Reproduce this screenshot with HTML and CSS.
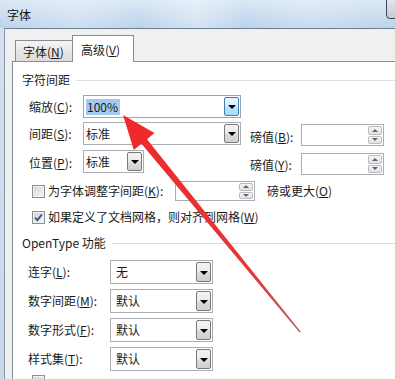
FILE: index.html
```html
<!DOCTYPE html>
<html lang="zh">
<head>
<meta charset="utf-8">
<title>字体</title>
<link rel="stylesheet" href="styles.css">
</head>
<body>
<div class="window">
  <div class="titlebar">
    <span class="title">字体</span>
    <div class="close"></div>
  </div>
  <div class="client">
    <div class="tabs">
      <div class="tab">字体(<u>N</u>)</div>
      <div class="tab active">高级(<u>V</u>)</div>
    </div>
    <div class="panel">
      <div class="gtitle">字符间距</div>

      <div class="row r1">
        <span class="lbl">缩放(<u>C</u>):</span>
        <div class="combo w-wide hot"><span class="val sel">100%</span><span class="btn"></span></div>
      </div>

      <div class="row r2">
        <span class="lbl">间距(<u>S</u>):</span>
        <div class="combo w-wide"><span class="val">标准</span><span class="btn"></span></div>
        <span class="plbl">磅值(<u>B</u>):</span>
        <div class="spin"><div class="sb"><span class="up"></span><span class="dn"></span></div></div>
      </div>

      <div class="row r3">
        <span class="lbl">位置(<u>P</u>):</span>
        <div class="combo w-narrow"><span class="val">标准</span><span class="btn"></span></div>
        <span class="plbl far">磅值(<u>Y</u>):</span>
        <div class="spin"><div class="sb"><span class="up"></span><span class="dn"></span></div></div>
      </div>

      <div class="crow c1">
        <span class="chk"></span>
        <span class="ctext fixed">为字体调整字间距(<u>K</u>):</span>
        <div class="spin small"><div class="sb"><span class="up"></span><span class="dn"></span></div></div>
        <span class="after">磅或更大(<u>O</u>)</span>
      </div>

      <div class="crow c2">
        <span class="chk checked"><svg viewBox="0 0 11 11" width="11" height="11"><path d="M2 5.6 L4.4 8.2 L9 2.4" fill="none" stroke="#3c5a90" stroke-width="1.9"/></svg></span>
        <span class="ctext">如果定义了文档网格，则对齐到网格(<u>W</u>)</span>
      </div>

      <div class="gtitle g2">OpenType 功能</div>

      <div class="lrow first">
        <span class="llbl">连字(<u>L</u>):</span>
        <div class="combo w-mid tall"><span class="val">无</span><span class="btn"></span></div>
      </div>
      <div class="lrow">
        <span class="llbl">数字间距(<u>M</u>):</span>
        <div class="combo w-mid tall"><span class="val">默认</span><span class="btn"></span></div>
      </div>
      <div class="lrow">
        <span class="llbl">数字形式(<u>F</u>):</span>
        <div class="combo w-mid tall"><span class="val">默认</span><span class="btn"></span></div>
      </div>
      <div class="lrow">
        <span class="llbl">样式集(<u>T</u>):</span>
        <div class="combo w-mid tall"><span class="val">默认</span><span class="btn"></span></div>
      </div>

      <div class="crow last">
        <span class="chk"></span>
      </div>
    </div>
  </div>
</div>

<svg class="arrow" width="395" height="379" viewBox="0 0 395 379">
  <defs>
    <linearGradient id="ag" gradientUnits="userSpaceOnUse" x1="123" y1="116" x2="300" y2="332">
      <stop offset="0" stop-color="#f0282a"/>
      <stop offset="0.75" stop-color="#e5383a"/>
      <stop offset="1" stop-color="#b0605e"/>
    </linearGradient>
  </defs>
  <polygon fill="url(#ag)" points="123,115 154.5,133 147,139.2 300.6,331.6 299.6,332.6 141.4,143.8 133.8,150"/>
</svg>
</body>
</html>
```

FILE: styles.css
```css
html, body {
  margin: 0;
  padding: 0;
}

body {
  width: 395px;
  height: 379px;
  overflow: hidden;
  position: relative;
  font-family: "Noto Sans CJK SC", "Noto Sans", sans-serif;
  font-size: 12px;
  color: #1a1a1a;
  background: #cfdbe9;
}

u {
  text-decoration: underline;
  text-underline-offset: 1px;
}

.window {
  height: 379px;
  overflow: hidden;
  display: flex;
  flex-direction: column;
  background: linear-gradient(#d4e1ee, #c9d8e8);
}

.titlebar {
  height: 28px;
  flex: none;
  position: relative;
  display: flex;
  align-items: center;
  padding: 2px 0 0 7px;
  box-sizing: border-box;
  background:
    linear-gradient(90deg, rgba(255,255,255,0) 0%, rgba(255,255,255,0.25) 20%, rgba(255,255,255,0) 35%, rgba(255,255,255,0.35) 50%, rgba(255,255,255,0) 62%, rgba(255,255,255,0.2) 78%, rgba(255,255,255,0) 100%),
    linear-gradient(#dce8f5, #c8dbef 60%, #bcd3ec);
}

.title {
  line-height: 16px;
  color: #111;
}

.close {
  position: absolute;
  right: -7px;
  top: -1px;
  width: 14px;
  height: 18px;
  border: 1px solid #3a4658;
  border-radius: 0 0 0 4px;
  background: linear-gradient(#e2e7ed, #c3cbd5);
}

.client {
  flex: 1;
  min-height: 0;
  overflow: hidden;
  margin-left: 4px;
  border-left: 1px solid #8494a6;
  border-top: 1px solid #6c7d92;
  background: #f0f0f0;
  padding: 6px 0 0 7px;
  display: flex;
  flex-direction: column;
}

.tabs {
  display: flex;
  align-items: flex-end;
  height: 27px;
  margin: 0 0 -1px 3px;
  position: relative;
  z-index: 1;
}

.tab {
  box-sizing: border-box;
  height: 21px;
  width: 57px;
  margin-bottom: 1px;
  border: 1px solid #898c95;
  border-bottom: none;
  border-right: none;
  background: linear-gradient(#f4f4f4, #e6e6e6 55%, #dcdcdc);
  display: flex;
  align-items: center;
  padding: 1px 0 0 7px;
  line-height: 16px;
  white-space: nowrap;
}

.tab.active {
  height: 27px;
  width: 62px;
  margin-bottom: 0;
  border-right: 1px solid #898c95;
  background: #fff;
  padding: 2px 0 0 8px;
}

.panel {
  flex: 1;
  border: 1px solid #898c95;
  border-right: none;
  background: #fff;
}

.gtitle {
  display: flex;
  align-items: center;
  height: 16px;
  line-height: 16px;
  margin: 10px 0 0 9px;
  white-space: nowrap;
}

.gtitle::after {
  content: "";
  flex: 1;
  height: 1px;
  margin-left: 6px;
  background: #dcdfe3;
}

.gtitle.g2 {
  margin-top: 10px;
}

.row {
  display: flex;
  align-items: flex-start;
  margin-left: 16px;
  height: 25px;
}

.row.r1 {
  margin-top: 7px;
  height: 23px;
}

.row.r2 {
  margin-top: 4px;
}

.row.r3 {
  margin-top: 3px;
}

.lbl {
  width: 54px;
  line-height: 16px;
  margin-top: 4px;
  white-space: nowrap;
}

.r3 .lbl {
  margin-top: 5px;
}

.plbl {
  width: 51px;
  margin-left: 9px;
  margin-top: 7px;
  line-height: 16px;
  white-space: nowrap;
}

.plbl.far {
  margin-left: 106px;
}

.combo {
  box-sizing: border-box;
  height: 23px;
  border: 1px solid #abadb3;
  background: #fff;
  display: flex;
  align-items: center;
}

.combo.tall {
  height: 24px;
}

.combo.w-wide { width: 158px; }
.combo.w-narrow { width: 61px; }
.combo.w-mid { width: 103px; }

.combo.hot {
  border-color: #8ea9c6;
}

.val {
  margin-left: 2px;
  line-height: 16px;
  white-space: nowrap;
}

.tall .val {
  margin-left: 5px;
}

.val.sel {
  background: #a4c9ee;
  padding: 0 2px 0 1px;
}

.btn {
  margin-left: auto;
  margin-right: 1px;
  box-sizing: border-box;
  width: 15px;
  height: 19px;
  border: 1px solid #7a7a7a;
  border-radius: 2px;
  background: linear-gradient(#f3f3f3, #ebebeb 48%, #dcdcdc 52%, #cfcfcf);
  display: flex;
  align-items: center;
  justify-content: center;
}

.tall .btn {
  height: 20px;
}

.btn::after {
  content: "";
  border-left: 4px solid transparent;
  border-right: 4px solid transparent;
  border-top: 4px solid #000;
  margin-top: 1px;
}

.hot .btn {
  border-color: #3c7fb1;
  background: linear-gradient(#eaf6fd, #d9f0fc 48%, #bee6fd 52%, #a7d9f5);
}

.spin {
  box-sizing: border-box;
  width: 83px;
  height: 22px;
  margin-top: 2px;
  border: 1px solid #abadb3;
  background: #fff;
  display: flex;
  justify-content: flex-end;
  padding: 1px;
}

.r3 .spin {
  margin-top: 3px;
}

.spin.small {
  width: 80px;
  height: 20px;
  margin-top: 0;
}

.sb {
  width: 14px;
  display: flex;
  flex-direction: column;
  gap: 1px;
}

.sb span {
  flex: 1;
  box-sizing: border-box;
  border: 1px solid #bcbcbc;
  border-radius: 2px;
  background: linear-gradient(#f6f6f6, #e2e2e2);
  display: flex;
  align-items: center;
  justify-content: center;
}

.sb .up::after {
  content: "";
  border-left: 3px solid transparent;
  border-right: 3px solid transparent;
  border-bottom: 3px solid #56657e;
}

.sb .dn::after {
  content: "";
  border-left: 3px solid transparent;
  border-right: 3px solid transparent;
  border-top: 3px solid #56657e;
}

.crow {
  display: flex;
  align-items: center;
  margin-left: 19px;
}

.crow.c1 {
  margin-top: 6px;
  height: 20px;
}

.crow.c2 {
  margin-top: 8px;
  height: 16px;
}

.crow.last {
  margin-top: 4px;
  align-items: flex-start;
}

.chk {
  box-sizing: border-box;
  width: 13px;
  height: 13px;
  flex: none;
  border: 1px solid #8e8f8f;
  background: linear-gradient(135deg, #cfd3d8, #f7f7f7);
  box-shadow: inset 0 0 0 1px #f2f2f2;
  display: flex;
  align-items: center;
  justify-content: center;
}

.ctext {
  margin-left: 3px;
  line-height: 16px;
  white-space: nowrap;
}

.ctext.fixed {
  width: 127px;
}

.after {
  margin-left: 12px;
  line-height: 16px;
  white-space: nowrap;
}

.lrow {
  display: flex;
  align-items: center;
  margin-left: 15px;
  margin-top: 5px;
  height: 24px;
}

.lrow.first {
  margin-top: 9px;
}

.llbl {
  width: 82px;
  line-height: 16px;
  white-space: nowrap;
}

.arrow {
  position: absolute;
  left: 0;
  top: 0;
  z-index: 10;
  pointer-events: none;
}
```
